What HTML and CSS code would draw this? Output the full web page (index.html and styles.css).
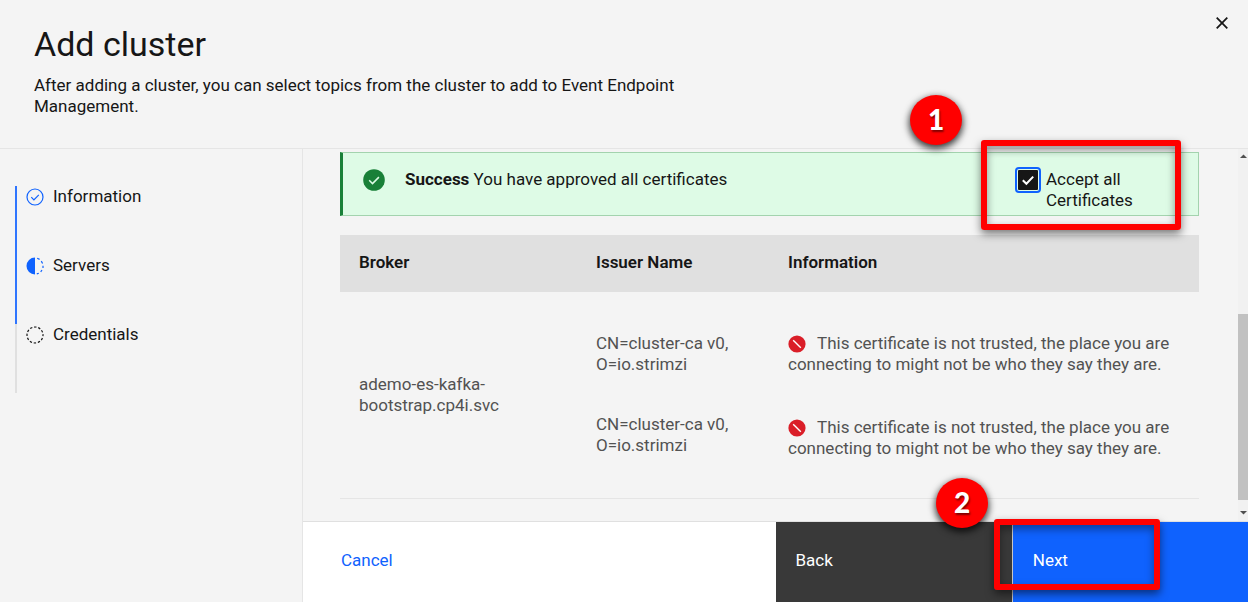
FILE: index.html
```html
<!DOCTYPE html>
<html lang="en">
<head>
<meta charset="utf-8">
<meta name="viewport" content="width=device-width, initial-scale=1">
<title>Add cluster</title>
<link rel="stylesheet" href="styles.css">
</head>
<body>
<div class="page">
  <header class="header">
    <div class="header-text">
      <h1 class="title">Add cluster</h1>
      <p class="subtitle">After adding a cluster, you can select topics from the cluster to add to Event Endpoint Management.</p>
    </div>
    <button class="close" type="button" aria-label="Close">
      <svg width="22" height="22" viewBox="0 0 32 32"><path fill="#161616" d="M24.6 9.2 22.8 7.4 16 14.2 9.2 7.4 7.4 9.2 14.2 16 7.4 22.8 9.2 24.6 16 17.8 22.8 24.6 24.6 22.8 17.8 16z"/></svg>
    </button>
  </header>

  <div class="body">
    <nav class="sidebar" aria-label="Progress">
      <ol class="steps">
        <li class="step step-done">
          <svg class="step-icon" viewBox="0 0 18 18"><circle cx="9" cy="9" r="8" fill="none" stroke="#0f62fe" stroke-width="1.2"/><path d="M5.3 9.2 7.9 11.8 12.8 6.8" fill="none" stroke="#0f62fe" stroke-width="1.2"/></svg>
          <span>Information</span>
        </li>
        <li class="step step-done">
          <svg class="step-icon" viewBox="0 0 18 18"><path d="M9 .5a8.5 8.5 0 0 0 0 17z" fill="#0f62fe"/><path d="M11.2 1.3 13.6 2.4M15.3 4.1 16.6 6.5M17 8.8V11M16 13 14.7 14.8M12.8 16.2 10.8 16.9" fill="none" stroke="#0f62fe" stroke-width="1.2"/></svg>
          <span>Servers</span>
        </li>
        <li class="step">
          <svg class="step-icon" viewBox="0 0 18 18"><circle cx="9" cy="9" r="8" fill="none" stroke="#161616" stroke-width="1.2" stroke-dasharray="2.4 1.79" stroke-dashoffset="1.2"/></svg>
          <span>Credentials</span>
        </li>
      </ol>
    </nav>

    <div class="main">
      <div class="viewport">
        <div class="content">
          <div class="notice" role="status">
            <svg class="notice-icon" viewBox="0 0 22 22"><circle cx="11" cy="11" r="10.8" fill="#198038"/><path d="M6.2 11.3 9.5 14.6 15.9 8.1" fill="none" stroke="#defbe6" stroke-width="1.5"/></svg>
            <p class="notice-text"><strong>Success</strong> You have approved all certificates</p>
            <div class="accept">
              <input class="accept-box" type="checkbox" id="accept" checked>
              <label for="accept">Accept all Certificates</label>
            </div>
          </div>

          <table class="certs">
            <colgroup><col class="col-broker"><col class="col-issuer"><col></colgroup>
            <thead>
              <tr><th scope="col">Broker</th><th scope="col">Issuer Name</th><th scope="col">Information</th></tr>
            </thead>
            <tbody>
              <tr>
                <td>ademo-es-kafka-<wbr>bootstrap.cp4i.svc</td>
                <td>
                  <p class="entry">CN=cluster-ca v0, O=io.strimzi</p>
                  <p class="entry">CN=cluster-ca v0, O=io.strimzi</p>
                </td>
                <td class="info">
                  <p class="entry"><svg class="deny" viewBox="0 0 18 18"><circle cx="9" cy="9" r="8.6" fill="#da1e28"/><path d="M5.2 5.2 12.8 12.8" stroke="#fff" stroke-width="1.4"/></svg>This certificate is not trusted, the place you are connecting to might not be who they say they are.</p>
                  <p class="entry"><svg class="deny" viewBox="0 0 18 18"><circle cx="9" cy="9" r="8.6" fill="#da1e28"/><path d="M5.2 5.2 12.8 12.8" stroke="#fff" stroke-width="1.4"/></svg>This certificate is not trusted, the place you are connecting to might not be who they say they are.</p>
                </td>
              </tr>
            </tbody>
          </table>
        </div>
        <div class="scrollbar" aria-hidden="true">
          <svg width="10" height="12" viewBox="0 0 10 12"><path d="M2 8 5.5 4.5 9 8z" fill="#505050"/></svg>
          <div class="track"><div class="thumb"></div></div>
          <svg width="10" height="12" viewBox="0 0 10 12"><path d="M2 4 5.5 7.5 9 4z" fill="#505050"/></svg>
        </div>
      </div>

      <footer class="actions">
        <button class="action cancel" type="button">Cancel</button>
        <button class="action back" type="button">Back</button>
        <button class="action next" type="button">Next</button>
      </footer>
    </div>
  </div>

  <div class="frame frame-accept"></div>
  <div class="badge badge-accept">1</div>
  <div class="frame frame-next"></div>
  <div class="badge badge-next">2</div>
</div>
</body>
</html>
```

FILE: styles.css
```css
* {
  box-sizing: border-box;
}

body {
  margin: 0;
  background: #f4f4f4;
  color: #161616;
  font-family: Roboto, "Liberation Sans", sans-serif;
  font-size: 17px;
  line-height: 21px;
}

h1, p, ol {
  margin: 0;
  padding: 0;
}

button {
  font: inherit;
  border: 0;
  cursor: pointer;
}

.page {
  position: relative;
  display: flex;
  flex-direction: column;
  min-height: 100vh;
}

.header {
  display: flex;
  justify-content: space-between;
  align-items: flex-start;
  padding: 12px 15px 31px 34px;
  border-bottom: 1px solid #e5e5e5;
}

.header-text {
  max-width: 680px;
  padding-top: 12px;
}

.title {
  margin-bottom: 11px;
  font-size: 34px;
  font-weight: 400;
  line-height: 40px;
}

.close {
  display: flex;
  padding: 0;
  background: none;
}

.body {
  flex: 1;
  display: flex;
}

.sidebar {
  flex: 0 0 303px;
  padding: 37px 15px;
  border-right: 1px solid #e5e5e5;
}

.steps {
  list-style: none;
}

.step {
  display: flex;
  align-items: flex-start;
  gap: 9px;
  height: 69px;
  padding-left: 9px;
  border-left: 2px solid #e0e0e0;
}

.step-done {
  border-left-color: #2f75fe;
}

.step-icon {
  width: 18px;
  height: 18px;
  margin-top: 2px;
}

.main {
  flex: 1;
  min-width: 0;
  display: flex;
  flex-direction: column;
}

.viewport {
  flex: 1;
  display: flex;
}

.content {
  flex: 1;
  min-width: 0;
  padding: 3px 39px 22px 37px;
}

.notice {
  display: flex;
  align-items: flex-start;
  min-height: 64px;
  margin-bottom: 19px;
  padding: 16px 0 0 20px;
  background: #defbe6;
  border: 1px solid #a3d3ae;
  border-left: 3px solid #198038;
}

.notice-icon {
  width: 22px;
  height: 22px;
  margin-right: 20px;
}

.notice-text {
  flex: 1;
}

.accept {
  display: flex;
  align-items: flex-start;
  gap: 8px;
  width: 180px;
}

.accept label {
  width: 100px;
}

.accept-box {
  appearance: none;
  width: 20px;
  height: 20px;
  margin: 1px 0 0;
  border-radius: 1px;
  outline: 2px solid #0f62fe;
  outline-offset: 1px;
}

.accept-box:checked {
  background: #161616 url('data:image/svg+xml,<svg xmlns="http://www.w3.org/2000/svg" viewBox="0 0 20 20"><path d="M4.8 10.2 8.4 13.8 15.2 6.6" fill="none" stroke="white" stroke-width="2"/></svg>') center / contain;
}

.certs {
  width: 100%;
  table-layout: fixed;
  border-collapse: collapse;
  text-align: left;
}

.col-broker {
  width: 237px;
}

.col-issuer {
  width: 192px;
}

.certs th {
  height: 57px;
  padding: 0 19px 3px;
  background: #e0e0e0;
  font-weight: 600;
}

.certs td {
  height: 206px;
  padding: 0 19px;
  border-bottom: 1px solid #e5e5e5;
  color: #525252;
  vertical-align: middle;
}

.certs .info {
  padding: 2px 8px 0 19px;
}

.entry + .entry {
  margin-top: 39px;
}

.info .entry + .entry {
  margin-top: 42px;
}

.deny {
  width: 18px;
  height: 18px;
  margin-right: 11px;
  vertical-align: -4px;
}

.scrollbar {
  display: flex;
  flex-direction: column;
  width: 10px;
  padding: 1px 0 2px;
  background: #f1f1f1;
}

.track {
  flex: 1;
  display: flex;
  flex-direction: column;
  justify-content: flex-end;
  padding-bottom: 7px;
}

.thumb {
  height: 55%;
  background: #c1c1c1;
}

.actions {
  display: grid;
  grid-template-columns: 2fr 1fr 1fr;
  border-top: 1px solid #e0e0e0;
}

.action {
  height: 80px;
  padding: 0 20px 4px;
  color: #fff;
  text-align: left;
}

.cancel {
  padding-left: 38px;
  background: #fff;
  color: #0f62fe;
}

.back {
  background: #393939;
}

.next {
  background: #0f62fe;
  border-left: 1px solid #c6c6c6;
}

.frame {
  position: absolute;
  border: 6px solid #f00;
  border-radius: 3px;
  box-shadow: 0 4px 8px rgba(0, 0, 0, 0.5), inset 0 4px 8px rgba(0, 0, 0, 0.4);
  pointer-events: none;
}

.frame-accept {
  top: 140px;
  right: 67px;
  width: 200px;
  height: 90px;
}

.frame-next {
  right: 88px;
  bottom: 12px;
  width: 166px;
  height: 71px;
}

.badge {
  position: absolute;
  width: 52px;
  height: 50px;
  border-radius: 50%;
  background: #f00;
  color: #fff;
  font-family: Lato, "Noto Sans", sans-serif;
  font-size: 28px;
  font-weight: 900;
  line-height: 48px;
  text-align: center;
  text-shadow: 1px 2px 2px rgba(0, 0, 0, 0.5);
  box-shadow: 0 3px 7px 1px rgba(0, 0, 0, 0.75);
}

.badge-accept {
  top: 95px;
  right: 286px;
}

.badge-next {
  right: 260px;
  bottom: 74px;
}
```
